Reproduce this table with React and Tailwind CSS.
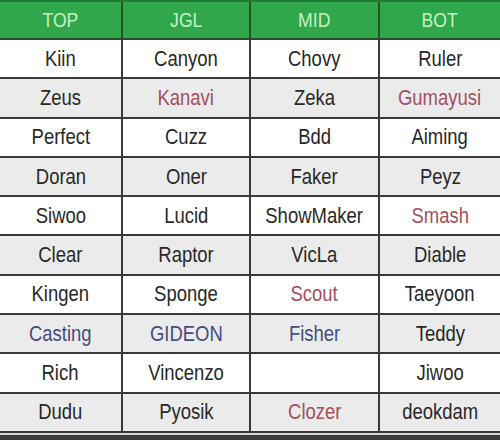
import React from "react";

const R = "text-[#a34f5e]";
const B = "text-[#464c80]";

const rows = [
    [["Kiin"], ["Canyon"], ["Chovy"], ["Ruler"]],
    [["Zeus"], ["Kanavi", R], ["Zeka"], ["Gumayusi", R]],
    [["Perfect"], ["Cuzz"], ["Bdd"], ["Aiming"]],
    [["Doran"], ["Oner"], ["Faker"], ["Peyz"]],
    [["Siwoo"], ["Lucid"], ["ShowMaker"], ["Smash", R]],
    [["Clear"], ["Raptor"], ["VicLa"], ["Diable"]],
    [["Kingen"], ["Sponge"], ["Scout", R], ["Taeyoon"]],
    [["Casting", B], ["GIDEON", B], ["Fisher", B], ["Teddy"]],
    [["Rich"], ["Vincenzo"], [""], ["Jiwoo"]],
    [["Dudu"], ["Pyosik"], ["Clozer", R], ["deokdam"]],
];

const heads = ["TOP", "JGL", "MID", "BOT"];

export default function App() {
    return (
        <div className="w-[500px] h-[440px] bg-[#f4f4f4] overflow-hidden font-['Liberation_Sans',Arial,sans-serif]">
            <div className="grid grid-cols-[123px_128px_129px_120px] h-[40px] bg-[#30a74b] border-t-2 border-b-2 border-t-[#1f7a34] border-b-[#2a4a30]">
                {heads.map((h, i) => (
                    <div
                        key={h}
                        className={`flex items-center justify-center text-[21px] text-[#c4f2c6] ${i < 3 ? "border-r-2 border-[#24502e]" : ""}`}
                    >
                        <span className="inline-block scale-x-[0.84]">{h}</span>
                    </div>
                ))}
            </div>
            {rows.map((row, r) => (
                <div
                    key={r}
                    className={`grid grid-cols-[123px_128px_129px_120px] h-[39.3px] border-b-2 border-[#3a3a3a] ${r % 2 ? "bg-[#ebebeb]" : "bg-white"}`}
                >
                    {row.map(([name, color], c) => (
                        <div
                            key={c}
                            className={`flex items-center justify-center text-[22px] leading-none ${color || "text-[#282828]"} ${c < 3 ? "border-r-2 border-[#3a3a3a]" : ""}`}
                        >
                            <span className="inline-block whitespace-nowrap scale-x-[0.84]">{name}</span>
                        </div>
                    ))}
                </div>
            ))}
            <div className="h-[2px] bg-[#d8d8d8]"></div>
            <div className="h-[10px] bg-[#3c3c3c]"></div>
        </div>
    );
}
